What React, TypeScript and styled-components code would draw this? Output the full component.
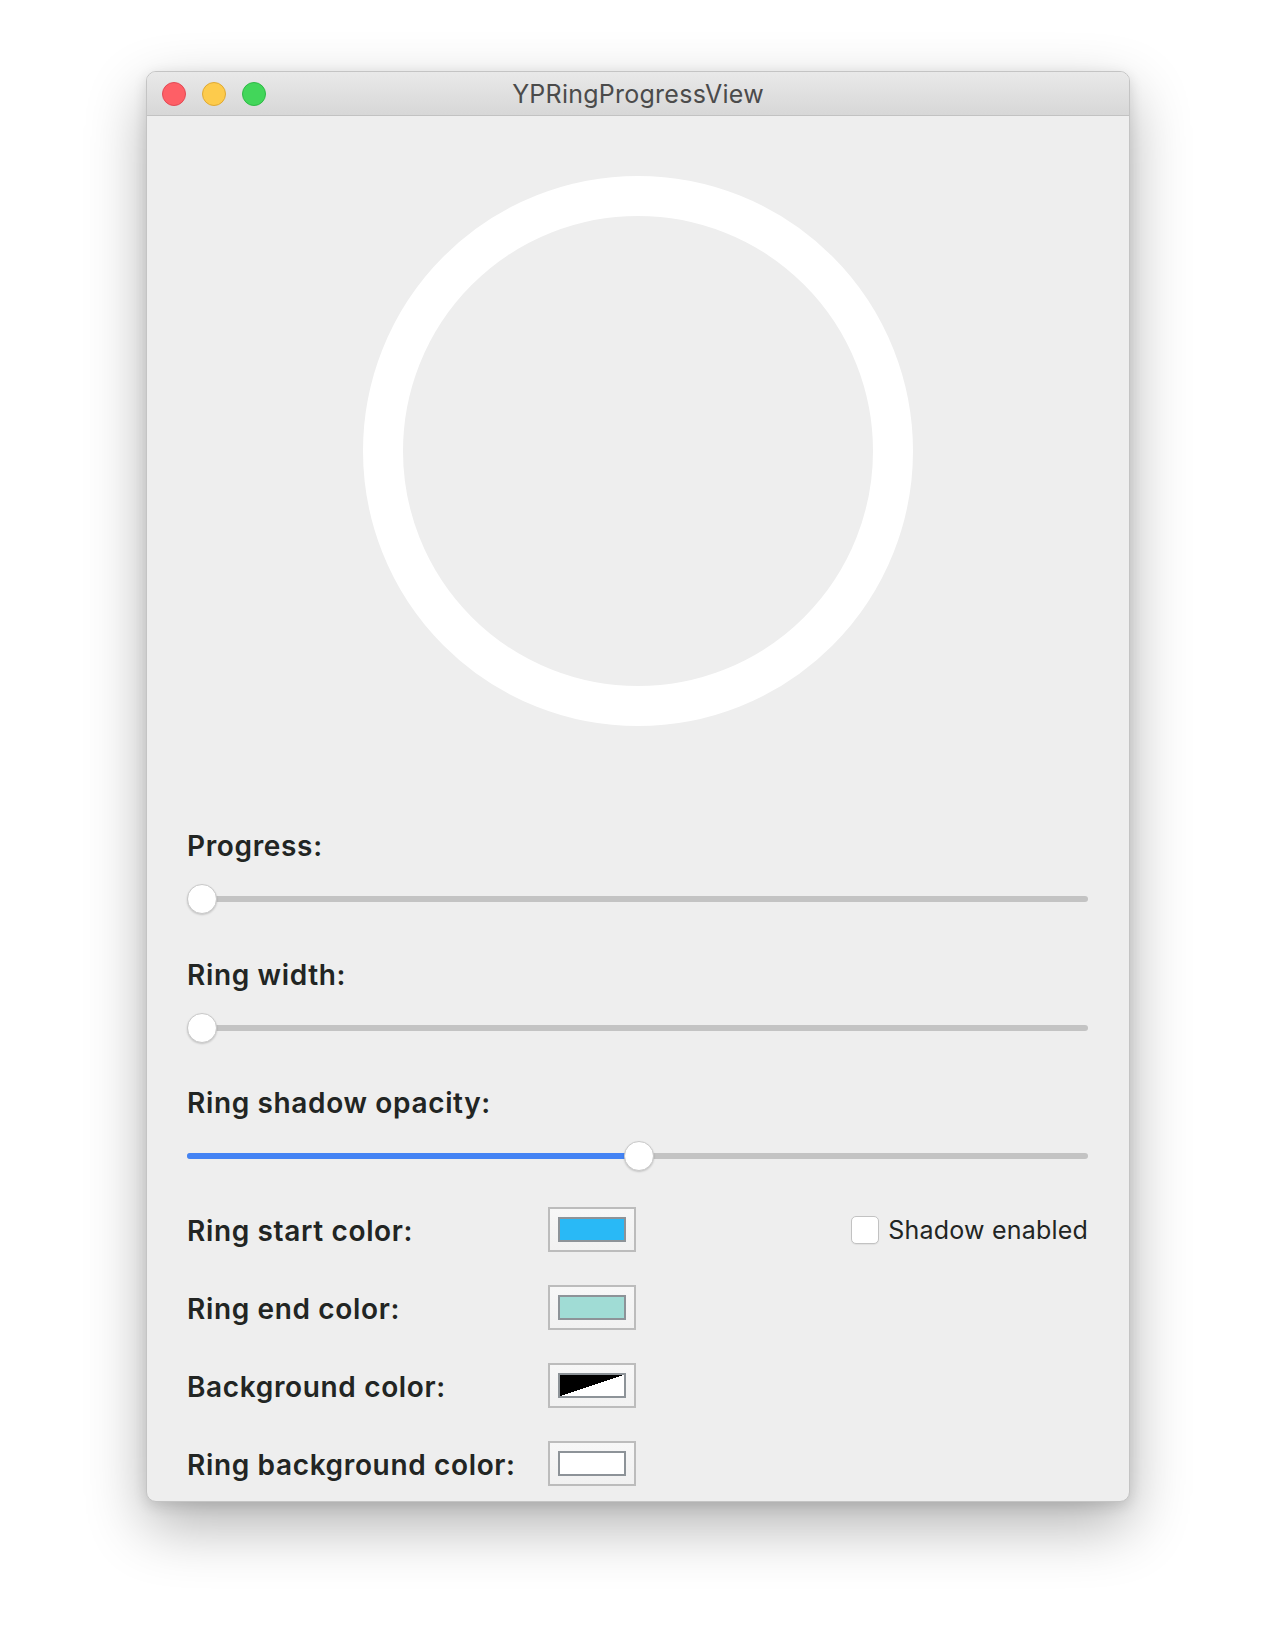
import React, { useState } from 'react';
import styled, { createGlobalStyle } from 'styled-components';

const GlobalStyle = createGlobalStyle`
    body {
        margin: 0;
        background: #ffffff;
        font-family: Inter, "Liberation Sans", sans-serif;
    }
`

const Page = styled.div`
    height: 1636px;
    box-sizing: border-box;
    padding: 71px 0 0 146px;
    overflow: hidden;
`

const Window = styled.div`
    width: 984px;
    height: 1431px;
    box-sizing: border-box;
    border: 1px solid #c4c4c4;
    border-radius: 10px;
    background: #eeeeee;
    box-shadow: 0 24px 60px rgba(0, 0, 0, 0.3), 0 4px 14px rgba(0, 0, 0, 0.12);
    display: flex;
    flex-direction: column;
    overflow: hidden;
`

const TitleBar = styled.header`
    height: 43px;
    border-bottom: 1px solid #c2c2c2;
    background: linear-gradient(#e9e9e9, #d7d7d7);
    display: grid;
    grid-template-columns: 1fr auto 1fr;
    align-items: center;
    padding-left: 15px;
    padding-right: 15px;
`

const Lights = styled.div`
    display: flex;
    gap: 16px;
`

const Light = styled.span<{ $fill: string; $edge: string }>`
    width: 24px;
    height: 24px;
    box-sizing: border-box;
    border-radius: 50%;
    background: ${p => p.$fill};
    border: 1px solid ${p => p.$edge};
`

const Title = styled.h1`
    margin: 0;
    font-size: 25px;
    font-weight: 400;
    letter-spacing: 0.25px;
    color: #4b4b4b;
    line-height: 30px;
`

const Content = styled.main`
    flex: 1;
    padding: 0 41px 0 40px;
    display: flex;
    flex-direction: column;
`

const RingBox = styled.div`
    display: flex;
    justify-content: center;
    margin-top: 60px;
    margin-bottom: 103px;
`

const Sliders = styled.div`
    display: flex;
    flex-direction: column;
    gap: 43.5px;
`

const Label = styled.div`
    font-size: 28px;
    line-height: 34px;
    font-weight: 600;
    letter-spacing: 0.65px;
    color: #222523;
`

const SliderLabel = styled(Label)`
    margin-bottom: 21px;
`

const SliderTrack = styled.div`
    position: relative;
    height: 30px;
    &::before {
        content: '';
        position: absolute;
        left: 0;
        right: 0;
        top: 12px;
        height: 6px;
        border-radius: 3px;
        background: #c3c3c3;
    }
`

const SliderFill = styled.div`
    position: absolute;
    left: 0;
    top: 12px;
    height: 6px;
    border-radius: 3px;
    background: #4383f4;
`

const Knob = styled.div`
    position: absolute;
    top: 0;
    width: 30px;
    height: 30px;
    box-sizing: border-box;
    border-radius: 50%;
    background: #ffffff;
    border: 1px solid #c9c9c9;
    box-shadow: 0 1px 2px rgba(0, 0, 0, 0.18);
`

const ColorRows = styled.div`
    margin-top: 36px;
    display: flex;
    flex-direction: column;
    gap: 33px;
`

const ColorRow = styled.div`
    display: grid;
    grid-template-columns: 361px 88px 1fr;
    align-items: center;
    height: 45px;
`

const RowLabel = styled(Label)`
    padding-top: 2px;
`

const Well = styled.div`
    width: 88px;
    height: 45px;
    box-sizing: border-box;
    border: 2px solid #bcbcbc;
    background: linear-gradient(#f7f7f7, #f1f1f1);
    padding: 8px;
`

const Swatch = styled.div<{ $fill: string }>`
    width: 100%;
    height: 100%;
    box-sizing: border-box;
    border: 2px solid #8d9398;
    background: ${p => p.$fill};
`

const CheckLabel = styled.label`
    justify-self: end;
    display: flex;
    align-items: center;
    gap: 9px;
    font-size: 25px;
    line-height: 30px;
    letter-spacing: 0.2px;
    color: #222523;
`

const CheckBox = styled.span`
    width: 28px;
    height: 28px;
    box-sizing: border-box;
    border: 1px solid #c2c2c2;
    border-radius: 5px;
    background: #ffffff;
    box-shadow: 0 1px 1px rgba(0, 0, 0, 0.06);
`

const Slider: React.FC<{ label: string; value: number; fill?: boolean }> = ({ label, value, fill }) => {
    const travel = 903 - 30;
    const left = value * travel;
    return (
        <div>
            <SliderLabel>{label}</SliderLabel>
            <SliderTrack>
                {fill && <SliderFill style={{ width: left + 15 }} />}
                <Knob style={{ left }} />
            </SliderTrack>
        </div>
    );
}

const colors = [
    { label: 'Ring start color:', fill: '#29b9f6' },
    { label: 'Ring end color:', fill: '#a0dcd5' },
    { label: 'Background color:', fill: 'linear-gradient(to bottom right, #000 50%, #fff 50%)' },
    { label: 'Ring background color:', fill: '#ffffff' },
];

const App: React.FC = () => {
    const [progress] = useState(0);
    const [ringWidth] = useState(0);
    const [opacity] = useState(0.5);

    return (
        <Page>
            <GlobalStyle />
            <Window>
                <TitleBar>
                    <Lights>
                        <Light $fill="#fe5f66" $edge="#e24a55" />
                        <Light $fill="#fdcb4c" $edge="#dfa934" />
                        <Light $fill="#42d65a" $edge="#2fb946" />
                    </Lights>
                    <Title>YPRingProgressView</Title>
                    <span />
                </TitleBar>
                <Content>
                    <RingBox>
                        <svg width="550" height="550" viewBox="0 0 550 550">
                            <circle cx="275" cy="275" r="255" fill="none" stroke="#ffffff" strokeWidth="40" />
                        </svg>
                    </RingBox>
                    <Sliders>
                        <Slider label="Progress:" value={progress} />
                        <Slider label="Ring width:" value={ringWidth} />
                        <Slider label="Ring shadow opacity:" value={opacity} fill />
                    </Sliders>
                    <ColorRows>
                        {colors.map((c, i) => (
                            <ColorRow key={c.label}>
                                <RowLabel>{c.label}</RowLabel>
                                <Well>
                                    <Swatch $fill={c.fill} />
                                </Well>
                                {i === 0 && (
                                    <CheckLabel>
                                        <CheckBox />
                                        Shadow enabled
                                    </CheckLabel>
                                )}
                            </ColorRow>
                        ))}
                    </ColorRows>
                </Content>
            </Window>
        </Page>
    );
}

export default App;
